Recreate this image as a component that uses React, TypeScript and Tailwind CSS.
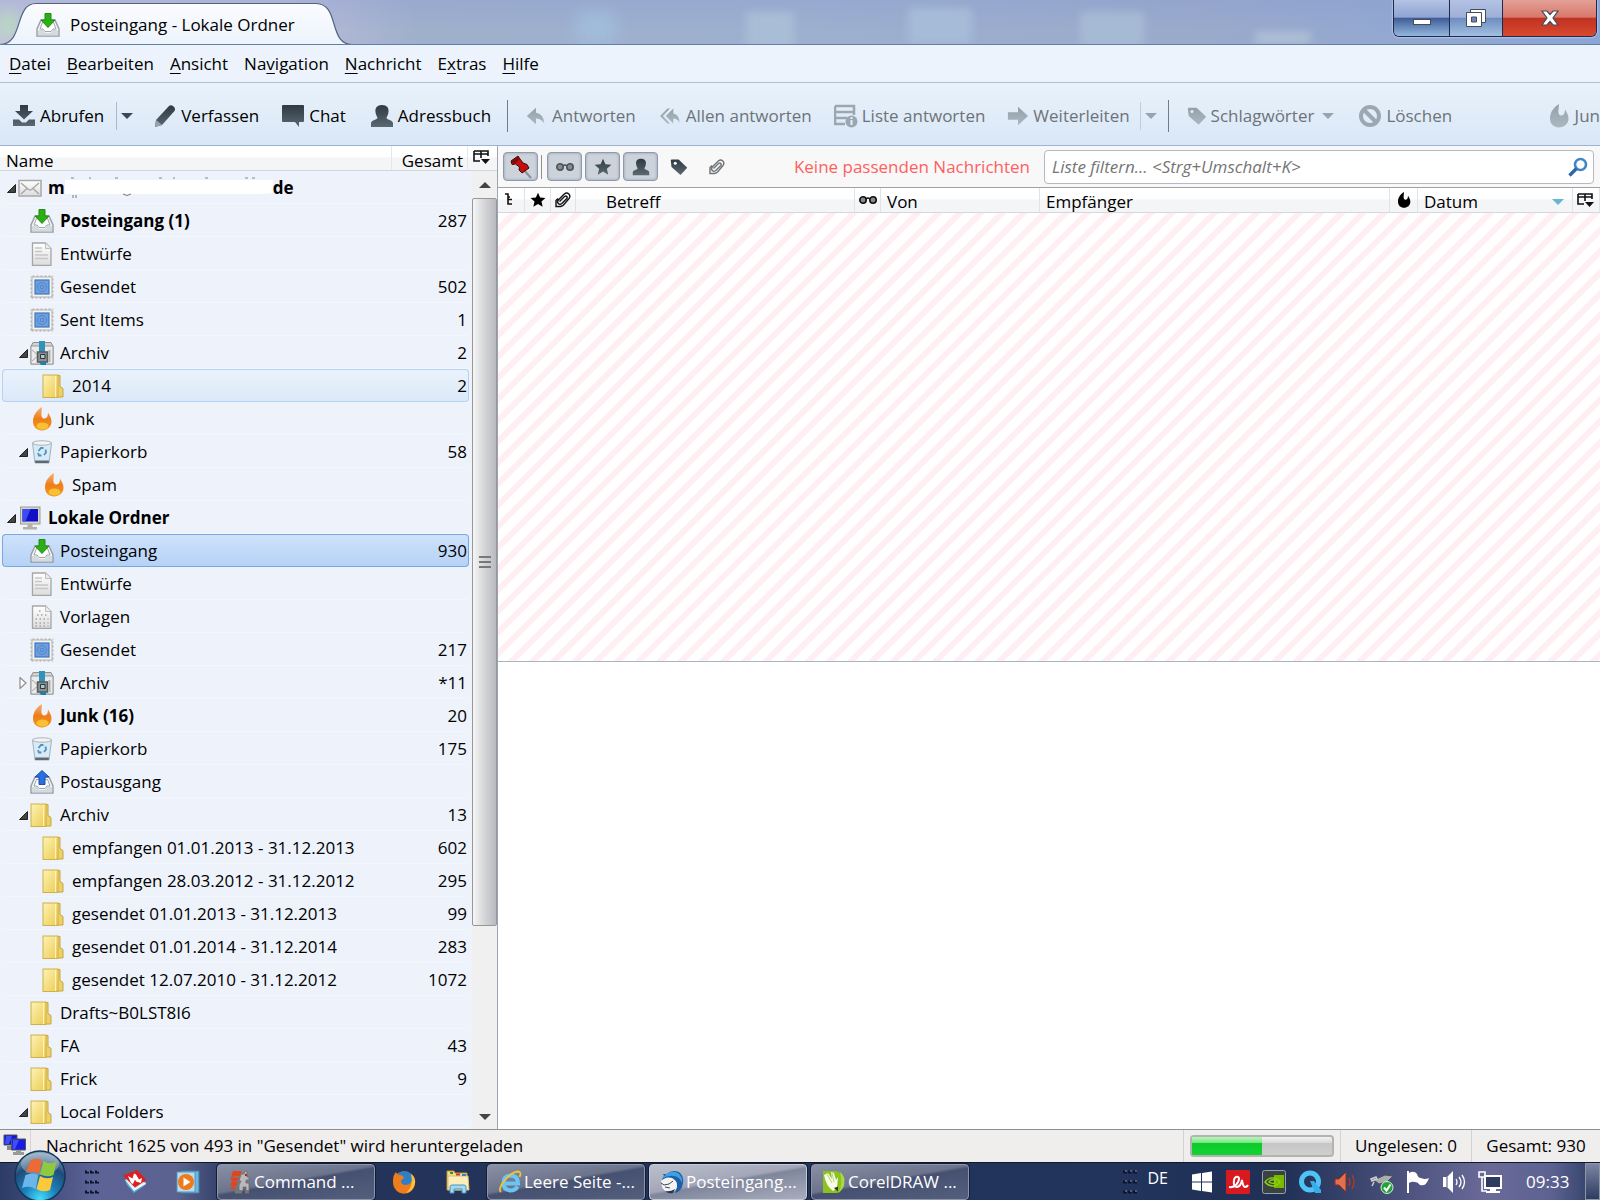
import type { ReactNode } from 'react';
import { clsx } from 'clsx';

type IconName =
  | 'mail'
  | 'inbox'
  | 'draft'
  | 'template'
  | 'stamp'
  | 'archive'
  | 'folder'
  | 'flame'
  | 'trash'
  | 'computer'
  | 'outbox';

type Folder = {
  name: string;
  icon: IconName;
  level: number;
  count?: string;
  bold?: boolean;
  twisty?: 'open' | 'closed';
  state?: 'hover' | 'selected';
  masked?: boolean;
};

const folders: Folder[] = [
  { name: 'm', icon: 'mail', level: 0, bold: true, twisty: 'open', masked: true },
  { name: 'Posteingang (1)', icon: 'inbox', level: 1, count: '287', bold: true },
  { name: 'Entwürfe', icon: 'draft', level: 1 },
  { name: 'Gesendet', icon: 'stamp', level: 1, count: '502' },
  { name: 'Sent Items', icon: 'stamp', level: 1, count: '1' },
  { name: 'Archiv', icon: 'archive', level: 1, count: '2', twisty: 'open' },
  { name: '2014', icon: 'folder', level: 2, count: '2', state: 'hover' },
  { name: 'Junk', icon: 'flame', level: 1 },
  { name: 'Papierkorb', icon: 'trash', level: 1, count: '58', twisty: 'open' },
  { name: 'Spam', icon: 'flame', level: 2 },
  { name: 'Lokale Ordner', icon: 'computer', level: 0, bold: true, twisty: 'open' },
  { name: 'Posteingang', icon: 'inbox', level: 1, count: '930', state: 'selected' },
  { name: 'Entwürfe', icon: 'draft', level: 1 },
  { name: 'Vorlagen', icon: 'template', level: 1 },
  { name: 'Gesendet', icon: 'stamp', level: 1, count: '217' },
  { name: 'Archiv', icon: 'archive', level: 1, count: '*11', twisty: 'closed' },
  { name: 'Junk (16)', icon: 'flame', level: 1, count: '20', bold: true },
  { name: 'Papierkorb', icon: 'trash', level: 1, count: '175' },
  { name: 'Postausgang', icon: 'outbox', level: 1 },
  { name: 'Archiv', icon: 'folder', level: 1, count: '13', twisty: 'open' },
  { name: 'empfangen 01.01.2013 - 31.12.2013', icon: 'folder', level: 2, count: '602' },
  { name: 'empfangen 28.03.2012 - 31.12.2012', icon: 'folder', level: 2, count: '295' },
  { name: 'gesendet 01.01.2013 - 31.12.2013', icon: 'folder', level: 2, count: '99' },
  { name: 'gesendet 01.01.2014 - 31.12.2014', icon: 'folder', level: 2, count: '283' },
  { name: 'gesendet 12.07.2010 - 31.12.2012', icon: 'folder', level: 2, count: '1072' },
  { name: 'Drafts~B0LST8I6', icon: 'folder', level: 1 },
  { name: 'FA', icon: 'folder', level: 1, count: '43' },
  { name: 'Frick', icon: 'folder', level: 1, count: '9' },
  { name: 'Local Folders', icon: 'folder', level: 1, twisty: 'open' },
];

const menus = [
  ['', 'D', 'atei'],
  ['', 'B', 'earbeiten'],
  ['', 'A', 'nsicht'],
  ['Na', 'v', 'igation'],
  ['', 'N', 'achricht'],
  ['E', 'x', 'tras'],
  ['', 'H', 'ilfe'],
];

const indents = ['pl-[3px]', 'pl-[15px]', 'pl-[27px]'];

function Gradients() {
  return (
    <svg className="absolute size-0" aria-hidden="true">
      <defs>
        <linearGradient id="dark" x1="0" y1="0" x2="0" y2="1">
          <stop offset="0" stopColor="#2f3941" />
          <stop offset="1" stopColor="#5b6973" />
        </linearGradient>
        <linearGradient id="dim" x1="0" y1="0" x2="0" y2="1">
          <stop offset="0" stopColor="#94a0a9" />
          <stop offset="1" stopColor="#abb8c2" />
        </linearGradient>
        <linearGradient id="paper" x1="0" y1="0" x2="0" y2="1">
          <stop offset="0" stopColor="#ffffff" />
          <stop offset="1" stopColor="#dcdcdc" />
        </linearGradient>
        <linearGradient id="yellow" x1="0" y1="0" x2="1" y2="1">
          <stop offset="0" stopColor="#fdf3b4" />
          <stop offset="1" stopColor="#eccb52" />
        </linearGradient>
        <linearGradient id="fire" x1="0" y1="0" x2="0" y2="1">
          <stop offset="0" stopColor="#f5b277" />
          <stop offset="0.5" stopColor="#ee7d18" />
          <stop offset="1" stopColor="#f29a1c" />
        </linearGradient>
        <radialGradient id="orb" cx="0.5" cy="0.95" r="0.95">
          <stop offset="0" stopColor="#45dcfb" />
          <stop offset="0.35" stopColor="#1b7fba" />
          <stop offset="0.7" stopColor="#1f4c78" />
          <stop offset="1" stopColor="#8fabc0" />
        </radialGradient>
      </defs>
    </svg>
  );
}

const FLAME =
  'M12 0C7 3 3 8 3 14.500C3 20 7 23.500 12 23.500S21.500 20 21.500 14.500C21.500 11 19.500 8 18 5.500C18 9 17 11 15 11.500C12 12 11 9 11.500 6C11.500 4 12 2 12 0Z';

function FolderIcon({ name }: { name: IconName }) {
  return (
    <svg viewBox="0 0 24 24" className="size-6 shrink-0" aria-hidden="true">
      {name === 'mail' && (
        <g stroke="#a8a8a8" strokeWidth="1.500">
          <rect x="1" y="4.500" width="22" height="15.500" fill="url(#paper)" />
          <path d="M3 7l7.500 6.500q1.500 1 3 0L21 7M3 18l6-5.500M21 18l-6-5.500" fill="none" />
        </g>
      )}
      {(name === 'inbox' || name === 'outbox') && (
        <>
          <path d="M5 7h14l4 9v7H1v-7z" fill="#f2f3f5" stroke="#9a9da1" strokeWidth="1.400" />
          <path d="M2 17h5l2 3h6l2-3h5v5.500H2z" fill="#d3dae0" />
          <path d="M6.500 9.500h11l2.500 6.500h-3l-2 2.500H9L7 16H4z" fill="#fff" stroke="#9fa5aa" />
          {name === 'inbox' ? (
            <path d="M9 0.500h6v6.500h4L12 14.500 5 7h4z" fill="#2cae15" stroke="#1f8d10" />
          ) : (
            <path d="M9 14.500h6V7h4L12 0.500 5 7h4z" fill="#2a6fe0" stroke="#1b4fb4" />
          )}
        </>
      )}
      {(name === 'draft' || name === 'template') && (
        <>
          <path d="M2.500 1h13l5.500 5.500V23.500h-18.500z" fill="url(#paper)" stroke="#a6a6a6" strokeWidth="1.300" />
          <path d="M15.500 1v5.500H21" fill="#ececec" stroke="#bdbdbd" />
          {name === 'draft' ? (
            <path d="M5 6h7M5 9.500h7M5 13h13M5 16.500h13" stroke="#c6c6c6" strokeWidth="1.500" />
          ) : (
            <path
              d="M9 6h4M7 10h10M5.500 14h13M5.500 18h13M5.500 21h13"
              stroke="#a5a5a5"
              strokeWidth="1.400"
              strokeDasharray="1.500 2.500"
            />
          )}
        </>
      )}
      {name === 'stamp' && (
        <>
          <rect x="0.500" y="0.500" width="23" height="23" fill="#b4b4b4" />
          <rect x="0.500" y="0.500" width="23" height="23" fill="none" stroke="#f4f4f4" strokeWidth="2" strokeDasharray="2 2" />
          <rect x="2.500" y="2.500" width="19" height="19" fill="#f4f4f4" />
          <rect x="5" y="5" width="14" height="14" fill="#6f9fdd" stroke="#3f77c0" strokeWidth="1.200" />
          <circle cx="12" cy="12" r="4.500" fill="none" stroke="#4f86cf" />
          <circle cx="12" cy="12" r="1.800" fill="none" stroke="#4f86cf" />
        </>
      )}
      {name === 'archive' && (
        <>
          <path d="M3 1.500h18l2 4V23H1V5.500z" fill="#d2d2d2" stroke="#8e8e8e" />
          <rect x="1" y="5" width="22" height="18" fill="#ebebeb" stroke="#9a9a9a" />
          <path d="M2 9l8 7M2 20l7-6" stroke="#a6a6a6" fill="none" />
          <path d="M9 0h6v11H9z" fill="#2f93ba" />
          <path d="M7.500 11h10v10h-10z" fill="#8b9195" stroke="#555b5f" strokeWidth="1.500" />
          <path d="M10.500 13.500h4.500v4h-4.500z" fill="#a9c9d6" stroke="#333" />
          <path d="M9 21h7v3H11z" fill="#1e7fae" />
          <path d="M19.500 9v12" stroke="#b1b1b1" strokeWidth="2" />
        </>
      )}
      {name === 'folder' && (
        <>
          <path d="M15 1.500h3v11l3 2v8.500h-6z" fill="#ecd06a" stroke="#c9a63c" />
          <rect x="1" y="1" width="15" height="22.500" fill="url(#yellow)" stroke="#d0b04a" />
          <path d="M13.500 2v21" stroke="#fff4c0" />
        </>
      )}
      {name === 'flame' && (
        <>
          <path d={FLAME} fill="url(#fire)" />
          <ellipse cx="12.500" cy="19" rx="6" ry="3.500" fill="#ffe14a" opacity="0.600" />
        </>
      )}
      {name === 'trash' && (
        <>
          <path d="M2.500 3h19l-2.500 20H5z" fill="#d9eaf4" stroke="#9db3c1" />
          <ellipse cx="12" cy="3" rx="9.500" ry="2.200" fill="#f4f4f4" stroke="#a9b4bb" />
          <path d="M5 20.500h14L18.700 23H5.300z" fill="#5d6a72" />
          <path d="M8.500 11l2.500-3h2.500M15.500 9.500l.500 3-2 2.500M11.500 15.500H9L8 13" fill="none" stroke="#4a93c4" strokeWidth="1.800" />
        </>
      )}
      {name === 'computer' && (
        <>
          <rect x="2.500" y="1" width="19.500" height="17" fill="#d6d3cb" stroke="#a09c92" />
          <rect x="4.500" y="3" width="15.500" height="12.500" fill="#1010c8" />
          <path d="M4.500 3h8l-5 12.500h-3z" fill="#3a4df0" />
          <path d="M9.500 18h5v3h-5zM5 21h14v2.500H5z" fill="#b5b1a6" />
        </>
      )}
    </svg>
  );
}

function Twisty({ state }: { state?: 'open' | 'closed' }) {
  return (
    <svg viewBox="0 0 12 12" className="size-3 shrink-0" aria-hidden="true">
      {state === 'open' && <path d="M9.500 2.500v8h-8z" fill="#444" stroke="#222" />}
      {state === 'closed' && <path d="M2 0.500v11l6-5.500z" fill="#fff" stroke="#8d8d8d" strokeWidth="1.200" />}
    </svg>
  );
}

function DropArrow({ className }: { className?: string }) {
  return (
    <svg viewBox="0 0 12 6" className={clsx('h-[6px] w-3 shrink-0', className)} aria-hidden="true">
      <path d="M0 0h12L6 6z" fill="currentColor" />
    </svg>
  );
}

function ToolIcon({ children, className = 'size-6' }: { children: ReactNode; className?: string }) {
  return (
    <svg viewBox="0 0 24 24" className={clsx('shrink-0', className)} aria-hidden="true">
      {children}
    </svg>
  );
}

function ToolButton({ label, icon, className }: { label: string; icon: ReactNode; className: string }) {
  return (
    <button type="button" className={clsx('flex shrink-0 items-center gap-1 whitespace-nowrap', className)}>
      {icon}
      {label}
    </button>
  );
}

function Clip({ color }: { color: string }) {
  return (
    <svg viewBox="0 0 16 16" className="size-4 shrink-0" aria-hidden="true">
      <path
        d="M4.500 9.500l5-5q1.500-1 2.300 0t0 2l-5 5q-2 1.500-3.500 0t0-3.500l6-6q2.500-2 4.500 0t.200 4.500l-5.500 6.500q-1 1-3 1.500H1V8.500l2-2"
        fill="none"
        stroke={color}
        strokeWidth="1.400"
      />
    </svg>
  );
}

function Glasses({ color }: { color: string }) {
  return (
    <svg viewBox="0 0 18 10" className="h-[10px] w-[18px]" aria-hidden="true">
      <circle cx="4" cy="5" r="3.200" fill="#8a8a8a" stroke={color} strokeWidth="1.600" />
      <circle cx="14" cy="5" r="3.200" fill="#8a8a8a" stroke={color} strokeWidth="1.600" />
      <path d="M7 4q2-2 4 0" fill="none" stroke={color} strokeWidth="1.600" />
    </svg>
  );
}

const STAR = 'M12 1l3.200 7.400 8 .700-6 5.300 1.800 7.900L12 18.100l-7 4.200 1.800-7.900-6-5.300 8-.700z';
const PERSON =
  'M12 1C17 1 19 4 18.500 8C18.200 11 17 12.500 16.500 14C17.500 16 23 16 23 19.500V23H1V19.500C1 16 6.500 16 7.500 14C7 12.500 5.800 11 5.500 8C5 4 7 1 12 1Z';
const TAG = 'M1 3l1-1h9.500L23 13l-9 9.500L2 12z';

function ColumnPicker() {
  return (
    <svg viewBox="0 0 17 16" className="h-4 w-[17px]" aria-hidden="true">
      <path d="M1 2h14v5M1 2v10h6M1 5h14M8 2v7M1 2" fill="none" stroke="#111" strokeWidth="1.600" />
      <path d="M8 10h9L12.500 15z" fill="#111" />
    </svg>
  );
}

function TitleBar() {
  return (
    <header className="relative flex h-[45px] items-start overflow-hidden border-b border-[#62809f] bg-[linear-gradient(180deg,rgba(130,150,210,0.25),transparent_70%),linear-gradient(90deg,#c3c2dd_0%,#b9bbd9_18%,#9fb0cc_26%,#9db0cf_50%,#9aaacb_75%,#8ba6d6_100%)]">
      <div className="absolute left-[576px] top-3 h-8 w-10 rounded bg-[#a3bfdf]/80 blur-sm" />
      <div className="absolute left-[746px] top-3 h-9 w-12 rounded bg-[#a9bdd6] blur-xs" />
      <div className="absolute left-[908px] top-2 h-9 w-16 rounded bg-[#a6bbd8] blur-xs" />
      <div className="absolute left-[1080px] top-3 h-9 w-16 rounded bg-[#a6bad4] blur-xs" />
      <div className="absolute left-[1255px] top-8 h-3 w-14 bg-[#afbfd6] blur-xs" />
      <div className="absolute left-0 top-3 h-6 w-4 bg-[#b5dfba] blur-sm" />
      <div className="relative z-10 h-[45px] w-[358px]">
        <svg viewBox="0 0 358 45" className="absolute inset-0 h-full w-full" aria-hidden="true">
          <defs>
            <linearGradient id="tab" x1="0" y1="0" x2="0" y2="1">
              <stop offset="0" stopColor="#fbfcfe" />
              <stop offset="1" stopColor="#ecf3fc" />
            </linearGradient>
          </defs>
          <path
            d="M0 44.500C24 44.500 14 3.500 36 3.500H316C340 3.500 328 44.500 352 44.500V46H0z"
            fill="url(#tab)"
            stroke="#4f6680"
            strokeWidth="1.200"
          />
          <path d="M0 45h352" stroke="#ecf3fc" strokeWidth="1" />
        </svg>
        <div className="relative flex h-full items-center gap-[10px] pl-9 pt-1">
          <FolderIcon name="inbox" />
          <h1 className="whitespace-nowrap">Posteingang - Lokale Ordner</h1>
        </div>
      </div>
      <div className="relative z-10 ml-auto mr-[3px] flex h-[37px] shrink-0 overflow-hidden rounded-b-md border border-t-0 border-[#1c2a4f] shadow-[0_0_2px_#fff]">
        <button
          type="button"
          aria-label="Minimieren"
          className="flex w-14 items-center justify-center border-r border-[#1c2a4f] bg-[linear-gradient(180deg,#b3c2e4_0%,#8fa4d3_48%,#3f5c97_50%,#93b7dd_100%)] pt-2"
        >
          <span className="block h-[6px] w-[18px] border border-[#444c5c] bg-white" />
        </button>
        <button
          type="button"
          aria-label="Wiederherstellen"
          className="flex w-[53px] items-center justify-center border-r border-[#1c2a4f] bg-[linear-gradient(180deg,#b3c2e4_0%,#9fb0d8_48%,#6d8cc0_50%,#a3bfe0_100%)]"
        >
          <svg viewBox="0 0 20 18" className="h-[18px] w-5" aria-hidden="true">
            <path d="M4.500 0.500h15v13h-15z" fill="#fff" stroke="#444c5c" />
            <path d="M0.500 3.500h15v14h-15z" fill="#fff" stroke="#444c5c" />
            <path d="M5.500 8h5v5h-5z" fill="#6d86b8" stroke="#444c5c" />
          </svg>
        </button>
        <button
          type="button"
          aria-label="Schließen"
          className="flex w-[93px] items-center justify-center bg-[linear-gradient(180deg,#e3a197_0%,#d9776a_48%,#c03221_50%,#d8492f_100%)]"
        >
          <svg viewBox="0 0 18 16" className="h-4 w-[18px]" aria-hidden="true">
            <path
              d="M1 1h5l3 3.500L12 1h5l-5 7 5 7h-5l-3-3.500L6 15H1l5-7z"
              fill="#fff"
              stroke="#444c5c"
              strokeWidth="1.200"
            />
          </svg>
        </button>
      </div>
    </header>
  );
}

function MenuBar() {
  return (
    <nav className="flex h-[38px] items-center gap-4 border-b border-[#a9bfdb] bg-[#ecf3fc] pl-[9px]">
      {menus.map(([before, key, after]) => (
        <button key={before + key + after} type="button" className="whitespace-nowrap">
          {before}
          <span className="underline underline-offset-3">{key}</span>
          {after}
        </button>
      ))}
    </nav>
  );
}

function Toolbar() {
  return (
    <div className="flex h-[63px] items-center overflow-hidden border-b border-[#9fb4d4] bg-gradient-to-b from-[#e9f2fb] to-[#d9e7f6] pt-1">
      <ToolButton
        label="Abrufen"
        className="ml-3"
        icon={
          <ToolIcon>
            <path d="M8 1h8v6h5l-9 8.500L3 7h5zM1 15.500h6l3 3h4l3-3h6V22H1z" fill="url(#dark)" />
          </ToolIcon>
        }
      />
      <span className="ml-3 h-7 w-px bg-[#a9b9cc]" />
      <button type="button" aria-label="Abrufen von" className="ml-1 text-[#3c4852]">
        <DropArrow />
      </button>
      <ToolButton
        label="Verfassen"
        className="ml-5"
        icon={
          <ToolIcon>
            <path d="M2 23l1-7L16 2q2-1.500 4.500.500T21.500 7L9 21z" fill="url(#dark)" />
            <path d="M2 23l1-7 6 5z" fill="#97a3ab" />
          </ToolIcon>
        }
      />
      <ToolButton
        label="Chat"
        className="ml-[22px]"
        icon={
          <ToolIcon>
            <path d="M2 1h20q1 0 1 1v15q0 1-1 1h-4v5l-4-5H2q-1 0-1-1V2q0-1 1-1z" fill="url(#dark)" />
          </ToolIcon>
        }
      />
      <ToolButton
        label="Adressbuch"
        className="ml-6"
        icon={
          <ToolIcon>
            <path d={PERSON} fill="url(#dark)" />
          </ToolIcon>
        }
      />
      <span className="ml-4 h-8 w-px shrink-0 bg-[#6f7c8b]" />
      <div className="flex grow items-center text-[#6d7378]">
        <ToolButton
          label="Antworten"
          className="ml-4"
          icon={
            <ToolIcon className="h-5 w-6">
              <path d="M1 12L12 2v6q9 1 10 13-4-6-10-6v7z" fill="url(#dim)" />
            </ToolIcon>
          }
        />
        <ToolButton
          label="Allen antworten"
          className="ml-[22px]"
          icon={
            <ToolIcon className="h-5 w-6">
              <path d="M7 12l9-9v6q7 1 7.500 11-3-5-7.500-5v6zM0 12l9-9h3l-8.500 9 8.500 9H9z" fill="url(#dim)" />
            </ToolIcon>
          }
        />
        <ToolButton
          label="Liste antworten"
          className="ml-[22px]"
          icon={
            <ToolIcon>
              <path d="M1 2h19v9M1 2v18h10M1 8h19M1 14h12" fill="none" stroke="#9aa7b1" strokeWidth="2.500" />
              <circle cx="17.500" cy="17.500" r="6" fill="#9aa7b1" />
              <path d="M17.500 16v5M17.500 13v2" stroke="#e4eef8" strokeWidth="2" />
            </ToolIcon>
          }
        />
        <ToolButton
          label="Weiterleiten"
          className="ml-[22px]"
          icon={
            <ToolIcon className="size-[22px]">
              <path d="M1 8h11V2l11 10-11 10v-6H1z" fill="url(#dim)" />
            </ToolIcon>
          }
        />
        <span className="ml-[10px] h-7 w-px bg-[#c0cddc]" />
        <button type="button" aria-label="Weiterleiten als" className="ml-1 text-[#97a3ad]">
          <DropArrow />
        </button>
        <span className="ml-[11px] h-8 w-px bg-[#6f7c8b]" />
        <ToolButton
          label="Schlagwörter"
          className="ml-[18px]"
          icon={
            <ToolIcon className="size-5">
              <path d={TAG} fill="url(#dim)" />
              <circle cx="6" cy="6.500" r="1.800" fill="#e4eef8" />
            </ToolIcon>
          }
        />
        <DropArrow className="ml-2 text-[#97a3ad]" />
        <ToolButton
          label="Löschen"
          className="ml-6"
          icon={
            <ToolIcon>
              <circle cx="12" cy="12" r="9" fill="none" stroke="#9ba8b3" strokeWidth="4" />
              <path d="M6 6l12 12" stroke="#9ba8b3" strokeWidth="4" />
            </ToolIcon>
          }
        />
        <ToolButton
          label="Jun"
          className="ml-auto"
          icon={
            <ToolIcon>
              <path d={FLAME} fill="url(#dim)" />
            </ToolIcon>
          }
        />
      </div>
    </div>
  );
}

function FolderRow({ folder }: { folder: Folder }) {
  const tone = clsx(
    'h-[33px] border-y p-0',
    !folder.state && 'border-x-transparent border-t-transparent border-b-[#f3f7fd]',
    folder.state === 'hover' && 'border-[#b4d2f5] bg-gradient-to-b from-[#eaf2fc] to-[#dce9f8]',
    folder.state === 'selected' && 'border-[#7ba7de] bg-gradient-to-b from-[#cfe2fb] to-[#b5d2f6]',
  );
  return (
    <tr aria-selected={folder.state === 'selected'}>
      <td className={clsx(tone, 'rounded-l border-l')}>
        <div className={clsx('flex items-center whitespace-nowrap', indents[folder.level], folder.bold && 'font-bold')}>
          <Twisty state={folder.twisty} />
          <FolderIcon name={folder.icon} />
          <span className="ml-[6px] flex items-center">
            {folder.name}
            {folder.masked && (
              <>
                <svg viewBox="0 0 208 22" className="h-[22px] w-[208px]" aria-hidden="true">
                  <path d="M6 1h3M24 1h2M50 1h3M94 1h3M108 1h2M140 1h3M180 1h3M187 1h3" stroke="#b9bcc2" strokeWidth="2" />
                  <path d="M0 3h208v13l-14 1H0z" fill="#fff" />
                  <path d="M8 18v3M11 18v3" stroke="#777" />
                  <path d="M58 17q4 3 8 0" fill="none" stroke="#777" />
                </svg>
                <span>de</span>
              </>
            )}
          </span>
        </div>
      </td>
      <td className={clsx(tone, 'w-20 rounded-r border-r pr-px text-right')}>{folder.count}</td>
    </tr>
  );
}

function FolderPane() {
  return (
    <aside className="flex w-[498px] shrink-0 flex-col border-r border-[#9ba5b3] bg-[#edf2fb]">
      <div className="flex h-[25px] border-b border-[#d3d6da] bg-[linear-gradient(180deg,#fff_45%,#f4f5f7_50%)]">
        <button type="button" className="grow border-r border-[#e3e6ea] pl-[6px] pt-[3px] text-left">
          Name
        </button>
        <button type="button" className="w-[76px] border-r border-[#e3e6ea] pr-1 pt-[3px] text-right">
          Gesamt
        </button>
        <button type="button" aria-label="Spalten auswählen" className="flex w-[29px] items-start pl-[5px] pt-[3px]">
          <ColumnPicker />
        </button>
      </div>
      <div className="flex grow">
        <div className="grow pl-[2px] pr-[3px]">
          <table className="w-full border-separate border-spacing-0">
            <tbody>
              {folders.map((folder, i) => (
                <FolderRow key={i} folder={folder} />
              ))}
            </tbody>
          </table>
        </div>
        <div className="flex w-[25px] flex-col bg-[#f0f0f0]">
          <button type="button" aria-label="Nach oben" className="flex h-[27px] items-center justify-center text-[#444]">
            <DropArrow className="rotate-180" />
          </button>
          <div className="flex h-[728px] flex-col items-center justify-center gap-[3px] rounded-xs border border-[#979797] bg-[linear-gradient(90deg,#f6f6f6,#dedfe1_35%,#cfcfd3_60%,#b9bac0)]">
            <span className="h-[2px] w-3 bg-[#77787c]" />
            <span className="h-[2px] w-3 bg-[#77787c]" />
            <span className="h-[2px] w-3 bg-[#77787c]" />
          </div>
          <button type="button" aria-label="Nach unten" className="mt-auto flex h-[25px] items-center justify-center text-[#444]">
            <DropArrow />
          </button>
        </div>
      </div>
    </aside>
  );
}

function FilterToggle({ label, pressed, children }: { label: string; pressed?: boolean; children: ReactNode }) {
  return (
    <button
      type="button"
      aria-label={label}
      aria-pressed={pressed}
      className={clsx(
        'flex h-[29px] w-[35px] shrink-0 items-center justify-center rounded-sm border',
        pressed ? 'border-[#8d9bb0] bg-[#cdd3db] shadow-[inset_0_0_3px_#8f9bab]' : 'border-transparent',
      )}
    >
      {children}
    </button>
  );
}

function FilterBar() {
  return (
    <div className="flex h-[42px] items-center gap-[3px] border-b border-[#a0a0a0] bg-[#f8f8f8] pl-[5px] pr-[6px]">
      <FilterToggle label="Filter beibehalten" pressed>
        <svg viewBox="0 0 24 24" className="size-6" aria-hidden="true">
          <path d="M14 14l8 9" stroke="#8b8f94" strokeWidth="2" />
          <path d="M2 6L9 1l2 3 3 4 4 1.500 2 3.500-7 5-3-3 .500-3-4-3-3.500.500z" fill="#c40d0d" stroke="#3d0a0a" />
          <path d="M2 6L9 1l2 3-5.500 5z" fill="#7d0d0d" />
        </svg>
      </FilterToggle>
      <span className="mr-[2px] h-6 w-px bg-[#8f8f8f]" />
      <FilterToggle label="Ungelesen" pressed>
        <Glasses color="#47535d" />
      </FilterToggle>
      <FilterToggle label="Gekennzeichnet" pressed>
        <ToolIcon className="size-[18px]">
          <path d={STAR} fill="url(#dark)" />
        </ToolIcon>
      </FilterToggle>
      <FilterToggle label="Kontakt" pressed>
        <ToolIcon className="size-[18px]">
          <path d={PERSON} fill="url(#dark)" />
        </ToolIcon>
      </FilterToggle>
      <FilterToggle label="Schlagwörter">
        <ToolIcon className="size-[18px]">
          <path d={TAG} fill="url(#dark)" />
          <circle cx="7" cy="7" r="2" fill="#fff" />
        </ToolIcon>
      </FilterToggle>
      <FilterToggle label="Anhang">
        <Clip color="#6e7377" />
      </FilterToggle>
      <span className="ml-auto shrink-0 text-[#ff6060]">Keine passenden Nachrichten</span>
      <div className="ml-[11px] flex h-[34px] w-[550px] items-center rounded-sm border border-[#b3bac4] bg-white pl-[7px] pr-[5px]">
        <input
          type="text"
          aria-label="Liste filtern"
          placeholder="Liste filtern... <Strg+Umschalt+K>"
          className="min-w-0 grow bg-transparent italic outline-none placeholder:text-[#757575]"
        />
        <svg viewBox="0 0 20 20" className="size-5" aria-hidden="true">
          <circle cx="12.500" cy="7.500" r="5.500" fill="#fff" stroke="#3f86c6" strokeWidth="2.600" />
          <path d="M8.500 11.500L1.500 18.500" stroke="#2c64ad" strokeWidth="3.400" />
        </svg>
      </div>
    </div>
  );
}

function MessageList() {
  const th = 'border-r border-[#e0e3e7] p-0 text-left font-normal';
  const thText = 'pt-[3px] leading-5';
  return (
    <section>
      <table className="w-full table-fixed border-separate border-spacing-0">
        <colgroup>
          <col className="w-[27px]" />
          <col className="w-[26px]" />
          <col className="w-[25px]" />
          <col />
          <col className="w-[26px]" />
          <col className="w-[159px]" />
          <col className="w-[350px]" />
          <col className="w-[28px]" />
          <col className="w-[155px]" />
          <col className="w-[27px]" />
        </colgroup>
        <thead>
          <tr className="h-6 bg-[linear-gradient(180deg,#fff_45%,#f4f5f7_50%)]">
            <th className={th} aria-label="Thema">
              <svg viewBox="0 0 12 16" className="ml-[6px] h-4 w-3" aria-hidden="true">
                <path d="M1 2h3v10h4M4 7.500h4M4 5h2" fill="none" stroke="#111" strokeWidth="1.600" />
              </svg>
            </th>
            <th className={th} aria-label="Gekennzeichnet">
              <svg viewBox="0 0 24 24" className="mx-auto size-4" aria-hidden="true">
                <path d={STAR} fill="#000" />
              </svg>
            </th>
            <th className={th} aria-label="Anhang">
              <div className="flex justify-center">
                <Clip color="#111" />
              </div>
            </th>
            <th className={clsx(th, thText, 'pl-[30px]')}>Betreff</th>
            <th className={th} aria-label="Gelesen">
              <div className="flex justify-center">
                <Glasses color="#111" />
              </div>
            </th>
            <th className={clsx(th, thText, 'pl-[6px]')}>Von</th>
            <th className={clsx(th, thText, 'pl-[6px]')}>Empfänger</th>
            <th className={th} aria-label="Junk-Status">
              <svg viewBox="0 0 24 24" className="mx-auto size-4" aria-hidden="true">
                <path d={FLAME} fill="#000" />
              </svg>
            </th>
            <th className={clsx(th, thText, 'pl-[6px] pr-2')}>
              <div className="flex items-center justify-between">
                Datum
                <DropArrow className="text-[#6bb4d6]" />
              </div>
            </th>
            <th className={th}>
              <button type="button" aria-label="Spalten auswählen" className="ml-1 block">
                <ColumnPicker />
              </button>
            </th>
          </tr>
        </thead>
      </table>
      <div className="h-[450px] border-b border-t border-b-[#a5b4c6] border-t-[#d5d8dc] bg-[repeating-linear-gradient(135deg,#fff_0_8px,#ffeef2_9px_14px,#fff_15px)]" />
    </section>
  );
}

function StatusBar() {
  return (
    <footer className="flex h-[33px] shrink-0 items-stretch border-t border-[#8f8f8f] bg-[#f0eded]">
      <div className="flex w-[31px] items-start border-r border-[#d8d4d4] pl-[3px] pt-1">
        <svg viewBox="0 0 24 22" className="h-[22px] w-6" aria-hidden="true">
          <path d="M1 1h13v10H1z" fill="#1414d8" stroke="#555" />
          <path d="M3 2h6l-3 8H2z" fill="#3b50f5" />
          <path d="M4 12h6v4H4z" fill="#8a8a8a" />
          <path d="M8.500 5h14v11h-14z" fill="#1a1ae6" stroke="#555" />
          <path d="M10 6h6l-4 9H9.500z" fill="#3b50f5" />
          <path d="M13 16h5v2h3v3H10v-3h3z" fill="#9a9a9a" />
        </svg>
      </div>
      <p className="flex grow items-center pl-[15px]">Nachricht 1625 von 493 in "Gesendet" wird heruntergeladen</p>
      <div className="flex items-center border-l border-[#d5d1d1] px-[6px]">
        <div className="h-[22px] w-36 rounded-sm border-2 border-[#b3b3b3] bg-[linear-gradient(180deg,#f2f2f2_0%,#dcdcdc_30%,#c6c6c6_36%,#cfcfcf_100%)]">
          <div className="h-full w-1/2 bg-[linear-gradient(180deg,#b5f5b9_0%,#80e888_30%,#0ccb29_36%,#15d234_100%)]" />
        </div>
      </div>
      <div className="flex w-[131px] items-center justify-center border-l border-[#d5d1d1]">Ungelesen: 0</div>
      <div className="flex w-[129px] items-center justify-center border-l border-[#d5d1d1]">Gesamt: 930</div>
    </footer>
  );
}

function Grip() {
  return (
    <svg viewBox="0 0 14 24" className="h-6 w-[14px] shrink-0" aria-hidden="true">
      <path d="M0 2h14M0 12h14M0 22h14" stroke="#0b1430" strokeWidth="3" strokeDasharray="4 1" />
      <path d="M2 1h12M2 11h12M2 21h12" stroke="#8d9abc" strokeWidth="1" strokeDasharray="2 3" />
    </svg>
  );
}

function TaskButton({ label, active, icon }: { label: string; active?: boolean; icon: ReactNode }) {
  return (
    <button
      type="button"
      className={clsx(
        'flex h-9 w-[158px] shrink-0 items-center gap-[2px] whitespace-nowrap rounded-sm border pl-[10px] text-white shadow-[0_0_0_1px_#141c33]',
        active
          ? 'border-[#c4cad8] bg-[linear-gradient(170deg,#bcc0cc_0%,#a2a6b8_45%,#7f869c_50%,#a9adbd_100%)]'
          : 'border-[#8d95aa] bg-[linear-gradient(170deg,#8a90a5_0%,#6c748c_45%,#465070_50%,#545e7d_100%)]',
      )}
    >
      {icon}
      {label}
    </button>
  );
}

function TaskIcon({ children }: { children: ReactNode }) {
  return (
    <svg viewBox="0 0 24 24" className="size-6 shrink-0" aria-hidden="true">
      {children}
    </svg>
  );
}

function Taskbar() {
  return (
    <div className="flex h-[38px] shrink-0 items-center border-t border-[#10182c] bg-[linear-gradient(90deg,#2c3c66_0%,#5d6396_6%,#5b628f_11%,#25345a_15%,#22325a_40%,#23345c_70%,#1f2f55_80%,#6a6a98_93%,#5c6290_97%,#2a3a62_100%)] text-white">
      <button type="button" aria-label="Start" className="relative z-10 -mt-3 ml-[14px] size-[52px] shrink-0">
        <svg viewBox="0 0 52 52" className="size-full" aria-hidden="true">
          <circle cx="26" cy="26" r="25" fill="url(#orb)" stroke="#123458" strokeWidth="1.500" />
          <ellipse cx="26" cy="14" rx="19" ry="11" fill="#fff" opacity="0.300" />
          <path d="M16 11q6-4 12-1l-3 14q-6-4-13-1z" fill="#ec6a35" />
          <path d="M29.500 11q6 4 13 1l-3 13q-7 3-13.500-1z" fill="#8fc93f" />
          <path d="M11.500 25q7-3 13 0l-3 14q-6-4-13.500-1z" fill="#6cb6ea" />
          <path d="M26 26q6 4 13 1l-3 13q-7 3-13.500-1z" fill="#fcc93a" />
        </svg>
      </button>
      <div className="ml-[19px] flex items-center">
        <Grip />
      </div>
      <button type="button" aria-label="PDF" className="ml-6">
        <TaskIcon>
          <path d="M2 10l12-5 9 9-12 8z" fill="#d7e9f3" />
          <path d="M2 11l9 8.500 11-7-.500 3L11 23l-7-8z" fill="#4fb0dc" />
          <path d="M3 11l8.500 7.500 11-6.500v2L11 21z" fill="#f2f8fb" />
          <path d="M0 5.500L14 0l9.500 10L12 17.500z" fill="#dc1f1f" />
          <path d="M5 6l4.500 2.500 1.500-5 2 1 3 5 3-1.500-1 5-5-1.500-1-2-2 4.500-2-1z" fill="#fff" />
        </TaskIcon>
      </button>
      <button type="button" aria-label="Media Player" className="ml-[29px]">
        <TaskIcon>
          <path d="M5 1h18v22H5z" fill="#6fb5dc" stroke="#3e7fa8" />
          <path d="M1 2h18v20H1z" fill="#b8dcf0" stroke="#5b93b8" />
          <circle cx="10" cy="12" r="8" fill="#ef7a1b" />
          <path d="M7.500 7.500l7 4.500-7 4.500z" fill="#fff" />
        </TaskIcon>
      </button>
      <div className="ml-[17px] flex items-center">
        <TaskButton
          label="Command ..."
          icon={
            <TaskIcon>
              <path d="M5 1h9l-2 5-9 1zM2 7.500h9l-2 4H4zM3 12h7l-2 4H3zM4 16.500h4l-2 3H2z" fill="#e0461c" />
              <path d="M13 4h3l1-3h2v6h2v3h-3v3h3v8h-3v-4h-3v4h-4v-6l2-4h-2z" fill="#b9b9b9" stroke="#6a6a6a" strokeWidth="0.800" />
              <path d="M7 20h7v3.500H7zM17 20h4v3.500h-4z" fill="#777" />
              <path d="M17 4h2v2h-2z" fill="#c41a1a" />
            </TaskIcon>
          }
        />
      </div>
      <button type="button" aria-label="Firefox" className="ml-[17px]">
        <TaskIcon>
          <circle cx="12" cy="12.500" r="11" fill="#e66a14" />
          <circle cx="12.500" cy="9" r="8" fill="#2f7fc6" />
          <path d="M1 11Q1 5 4 2q1 3 4 3 3 0 4 3l-3 2.500q0 4 4 4.500 5 0 7-4 1-4-1-7.500 5 4 4 10-2 10-11 10T1 11z" fill="#ec7c1c" />
          <path d="M19 4q5 4 4 9.500-2 8-9 9.500 8-7 5-19z" fill="#fbc13a" />
        </TaskIcon>
      </button>
      <button type="button" aria-label="Explorer" className="ml-[30px]">
        <TaskIcon>
          <path d="M1 1h7l1 2h12v17H1z" fill="#f6dd8a" stroke="#b99536" />
          <path d="M2 6h20l1 14H2z" fill="#fbeebb" stroke="#d9bf6c" />
          <path d="M4 3h3" stroke="#3a8f3a" strokeWidth="2" />
          <path d="M10 4.500h4" stroke="#d03a2a" strokeWidth="2" />
          <path d="M16 5h4" stroke="#3a7fd0" strokeWidth="2" />
          <path d="M4 23v-6q0-2 2-2h12q2 0 2 2v6h-4v-4H8v4z" fill="#9fd9f5" stroke="#4b93c0" />
        </TaskIcon>
      </button>
      <div className="ml-[17px] flex items-center gap-1">
        <TaskButton
          label="Leere Seite -..."
          icon={
            <TaskIcon>
              <path d="M19.500 16.500Q17.500 20.500 12.500 20.500 5.500 20 5.500 13t7-7.500q7.500 0 7.500 8H7" fill="none" stroke="#6cc4f5" strokeWidth="4" />
              <path d="M3 22Q0 20 5 12.500 13 2 20 1.500q4 .500 1.500 5.500" fill="none" stroke="#f2c52c" strokeWidth="1.800" />
            </TaskIcon>
          }
        />
        <TaskButton
          label="Posteingang..."
          active
          icon={
            <TaskIcon>
              <path d="M4 20Q-1 12 4 6L3 4l4 0q5-5 12-2 5 4 4 11-1 8-8 10 2-4 1-8L4 12z" fill="#1d5fa8" />
              <path d="M2 9l4-5q6-4 12-1 5 4 4 10-2-6-8-7-6-1-12 3z" fill="#3f9fdf" />
              <path d="M1 11q5-5 11-3 6 3 5 9-1 5-7 5-6 0-8-5z" fill="#f3f3f3" />
              <path d="M1 13l3 2 5-1 4-3M5 17l5 1" fill="none" stroke="#444" />
              <path d="M5 21q5 1 10-2l-2 4q-5 1-8-2z" fill="#2a3550" />
            </TaskIcon>
          }
        />
        <TaskButton
          label="CorelDRAW ..."
          icon={
            <TaskIcon>
              <path d="M1 1h13q8 2 8 11t-7 11H1z" fill="#8cc21e" />
              <path d="M18 2q6 4 4 14l-5 7q4-11 1-21z" fill="#a9d84a" />
              <path d="M2 5l4-2 4 6-1-7 3 1 2 7 2-3-1 11-4 3Q4 16 2 5z" fill="#f7fbe8" />
              <path d="M5 4l5 9M10 3l2 9" stroke="#b6d672" />
              <path d="M12 18l4 3.500 0-5z" fill="#2f3a10" />
            </TaskIcon>
          }
        />
      </div>
      <div className="ml-auto flex shrink-0 items-center">
        <Grip />
        <span className="ml-[11px] pb-2 text-[16px]">DE</span>
        <div className="ml-[22px] flex items-center gap-3">
          <TaskIcon>
            <path d="M2 4.500l9-1.500v8.500H2zM12 3l10-1.500v10H12zM2 12.500h9V21l-9-1.500zM12 12.500h10v10L12 21z" fill="#fff" />
          </TaskIcon>
          <TaskIcon>
            <rect width="24" height="24" rx="1" fill="#d81920" />
            <path d="M3 17q6 1 9-5 2-4 0-5-3-1-4 3-1 7 3 7 4-1 5-7 1 7 3 7 2 0 3-2" fill="none" stroke="#fff" strokeWidth="2" />
          </TaskIcon>
          <TaskIcon>
            <rect x="0.500" y="0.500" width="23" height="23" rx="2" fill="#3b4243" stroke="#9aa0a4" />
            <path d="M12 5h10v13H12z" fill="#76b900" />
            <path d="M3 12q4-5 9-4 4 1 6 4-3 4-7 4-5 0-8-4zM7 12q2-3 5-2 2 1 1 3-3 1-6-1z" fill="none" stroke="#8fd010" strokeWidth="1.400" />
          </TaskIcon>
          <TaskIcon>
            <circle cx="12" cy="11.500" r="8.500" fill="none" stroke="#4cc5f5" strokeWidth="5" />
            <path d="M12 11l4 0 7 9v3h-6z" fill="#37aee8" />
          </TaskIcon>
          <TaskIcon>
            <path d="M1 9h4l7-7v20l-7-7H1z" fill="#e27050" stroke="#8e2f18" />
            <path d="M15 8q2 4 0 8M18 5q4 7 0 14" fill="none" stroke="#b33a1d" strokeWidth="1.300" />
          </TaskIcon>
          <TaskIcon>
            <path d="M4 10l11-5 8 1-6 6-8 2z" fill="#a9adb1" stroke="#4c5054" />
            <path d="M1 9l5-2 1 2-5 2zM4 12l-2 4" stroke="#c9ccd0" fill="#888" strokeWidth="1.500" />
            <circle cx="17" cy="17.500" r="6" fill="#23a33c" stroke="#d6f0d9" />
            <path d="M14 17.500l2.500 3 4-6" fill="none" stroke="#fff" strokeWidth="2" />
          </TaskIcon>
          <TaskIcon>
            <path d="M2 1v22" stroke="#fff" strokeWidth="2" />
            <path d="M3 3q5-3 8 1 1 4 4 4 4 2 8 0-3 9-9 7-2-3-5-3-3-1-6 1z" fill="#fff" />
          </TaskIcon>
          <TaskIcon>
            <path d="M1 7h4l6-6v22l-6-6H1z" fill="#fff" />
            <path d="M5 7v10" stroke="#4a517a" />
            <path d="M14 9q2 3 0 6M17 7q4 5 0 10M20 5q5 7 0 14" fill="none" stroke="#fff" strokeWidth="1.300" />
          </TaskIcon>
          <TaskIcon>
            <path d="M7 6h16v12H7z" fill="#2d3b60" stroke="#fff" strokeWidth="2" />
            <path d="M12 19h6v2h4v2H8v-2h4z" fill="#fff" />
            <path d="M1 2h6v5H1zM4 7v14h5" fill="none" stroke="#fff" strokeWidth="1.600" />
          </TaskIcon>
        </div>
        <time className="ml-6 w-[44px]">09:33</time>
        <button
          type="button"
          aria-label="Desktop anzeigen"
          className="ml-[15px] h-[37px] w-[15px] border border-[#8d95aa] bg-gradient-to-b from-[#7c86a4] to-[#2f3c60]"
        />
      </div>
    </div>
  );
}

export default function App() {
  return (
    <div className="flex min-h-screen w-full flex-col overflow-hidden bg-white font-['Open_Sans','Noto_Sans',sans-serif] text-[17px] leading-6 text-black">
      <Gradients />
      <TitleBar />
      <MenuBar />
      <Toolbar />
      <div className="flex grow">
        <FolderPane />
        <main className="flex min-w-0 grow flex-col">
          <FilterBar />
          <MessageList />
        </main>
      </div>
      <StatusBar />
      <Taskbar />
    </div>
  );
}
